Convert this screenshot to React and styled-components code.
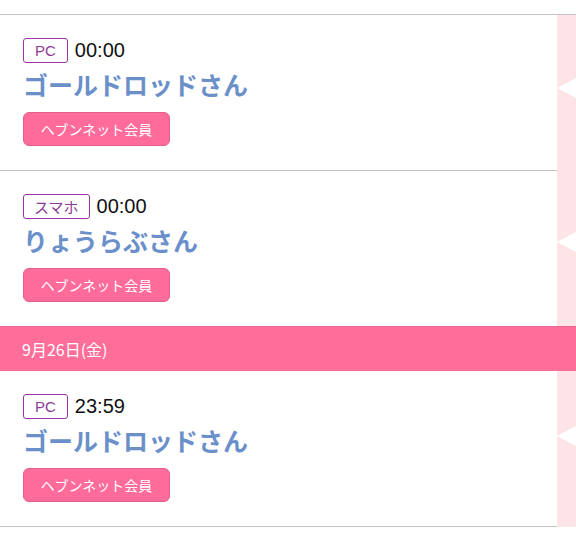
import styled, { createGlobalStyle } from "styled-components";

const GlobalStyle = createGlobalStyle`
  html, body {
    margin: 0;
    padding: 0;
    background: #ffffff;
  }
  body {
    font-family: "Noto Sans CJK JP", "Noto Sans", sans-serif;
    overflow: hidden;
  }
`;

const Page = styled.div`
  width: 576px;
  height: 539px;
  padding-top: 14px;
  box-sizing: border-box;
`;

const List = styled.div`
  border-top: 1px solid #c4c4c4;
`;

const Row = styled.div`
  display: flex;
`;

const Content = styled.div`
  flex: 1;
  padding: 22px 23px 24px;
  border-bottom: ${({ last }) => (last ? "none" : "1px solid #c4c4c4")};
`;

const Side = styled.div`
  position: relative;
  width: 19px;
  background: #fde4e7;
`;

const Notch = styled.div`
  position: absolute;
  right: 0;
  top: ${({ top }) => top}px;
  width: 0;
  height: 0;
  border-top: 10px solid transparent;
  border-bottom: 10px solid transparent;
  border-right: 19px solid #ffffff;
`;

const Head = styled.div`
  display: flex;
  align-items: center;
  gap: 7px;
  height: 26px;
`;

const Badge = styled.span`
  display: inline-flex;
  align-items: center;
  justify-content: center;
  box-sizing: border-box;
  height: 25px;
  padding: 0 ${({ wide }) => (wide ? 10 : 11)}px;
  border: 1px solid #9c35a3;
  border-radius: 3px;
  color: #8c3a95;
  font-size: 15px;
  font-family: "Liberation Sans", "Noto Sans CJK JP", sans-serif;
`;

const Time = styled.span`
  font-family: "Liberation Sans", Arial, sans-serif;
  font-size: 20px;
  color: #111;
`;

const Name = styled.div`
  margin-top: 2px;
  line-height: 38px;
  font-size: 25px;
  font-weight: 700;
  color: #6b8fc9;
`;

const Member = styled.div`
  display: inline-flex;
  align-items: center;
  justify-content: center;
  box-sizing: border-box;
  margin-top: 9px;
  width: 147px;
  height: 34px;
  border: 1px solid #e4608a;
  border-radius: 6px;
  background: #ff6b9a;
  color: #ffffff;
  font-size: 14px;
`;

const DateBar = styled.div`
  height: 44px;
  display: flex;
  align-items: center;
  padding-left: 22px;
  background: #ff6d99;
  border-top: 1px solid #e86590;
  color: #ffffff;
  font-size: 16px;
`;

const Entry = ({ device, time, name, last, notch }) => (
  <Row>
    <Content last={last}>
      <Head>
        <Badge wide={device.length > 2}>{device}</Badge>
        <Time>{time}</Time>
      </Head>
      <Name>{name}</Name>
      <Member>ヘブンネット会員</Member>
    </Content>
    <Side>
      <Notch top={notch} />
    </Side>
  </Row>
);

export default function App() {
  return (
    <Page>
      <GlobalStyle />
      <List>
        <Entry device="PC" time="00:00" name="ゴールドロッドさん" notch={63} />
        <Entry device="スマホ" time="00:00" name="りょうらぶさん" last notch={61} />
        <DateBar>9月26日(金)</DateBar>
        <Entry device="PC" time="23:59" name="ゴールドロッドさん" notch={55} />
      </List>
    </Page>
  );
}
